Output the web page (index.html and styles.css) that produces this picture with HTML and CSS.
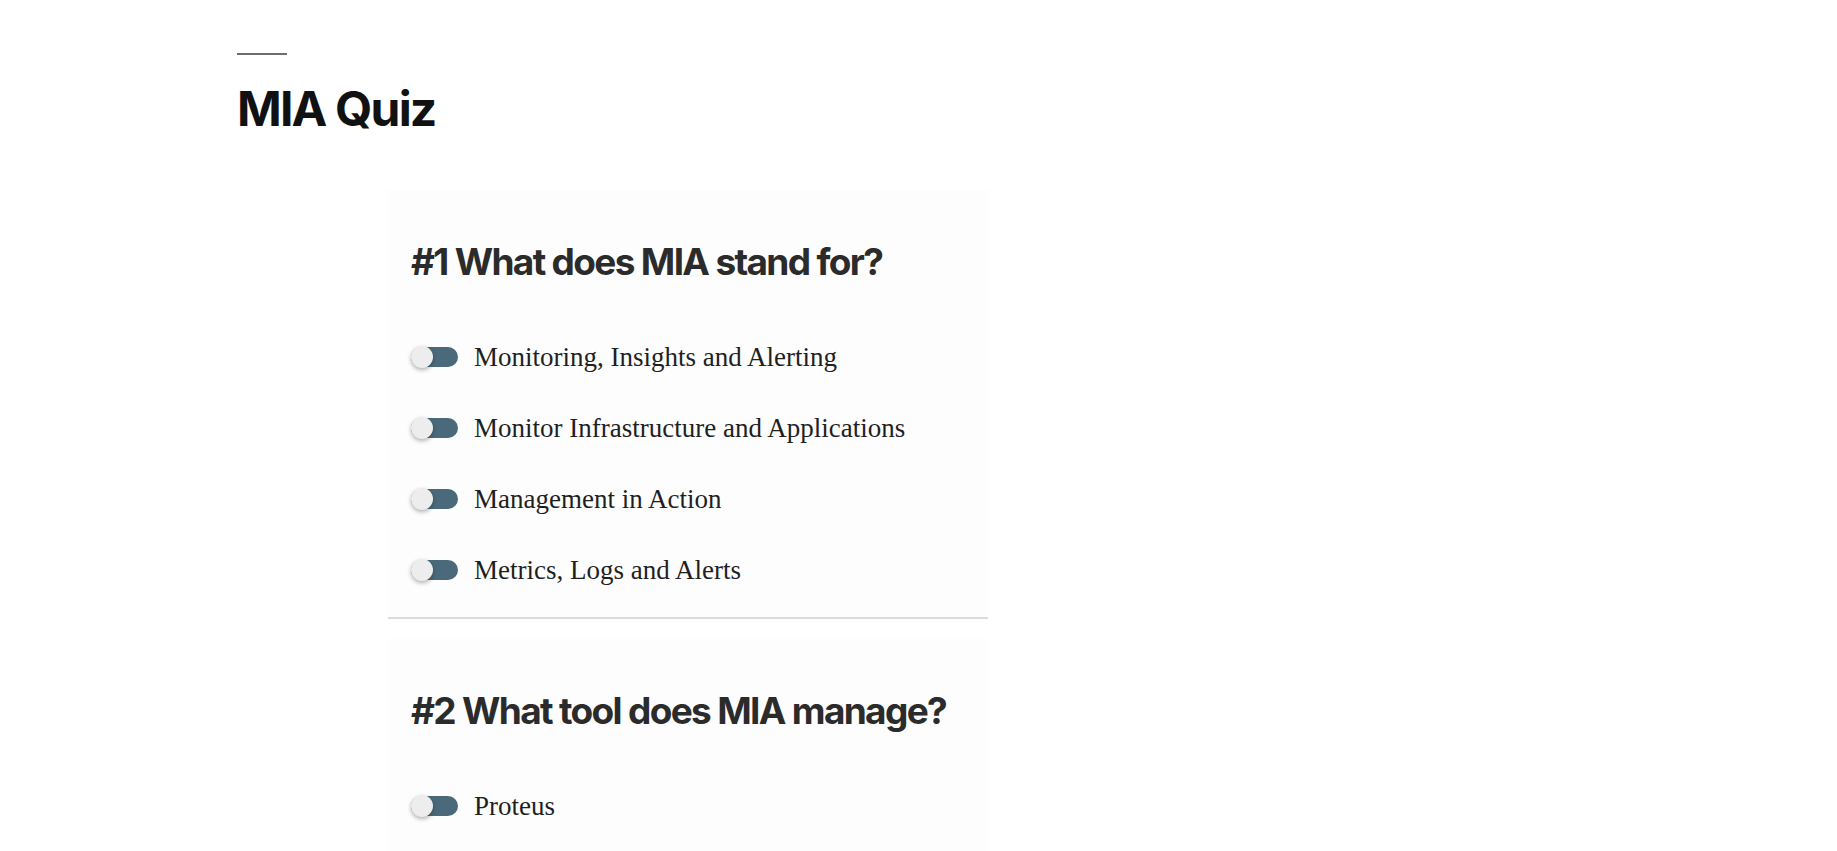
FILE: index.html
```html
<!DOCTYPE html>
<html lang="en">
<head>
    <meta charset="UTF-8">
    <meta name="viewport" content="width=device-width, initial-scale=1.0">
    <title>MIA Quiz</title>
    <link rel="stylesheet" href="styles.css">
</head>
<body>
    <main class="page">
        <header class="page-header">
            <hr class="title-rule">
            <h1>MIA Quiz</h1>
        </header>

        <section class="quiz">
            <div class="question">
                <h2>#1 What does MIA stand for?</h2>
                <ul class="answers">
                    <li><label class="answer"><span class="switch"></span><span>Monitoring, Insights and Alerting</span></label></li>
                    <li><label class="answer"><span class="switch"></span><span>Monitor Infrastructure and Applications</span></label></li>
                    <li><label class="answer"><span class="switch"></span><span>Management in Action</span></label></li>
                    <li><label class="answer"><span class="switch"></span><span>Metrics, Logs and Alerts</span></label></li>
                </ul>
            </div>

            <div class="question">
                <h2>#2 What tool does MIA manage?</h2>
                <ul class="answers">
                    <li><label class="answer"><span class="switch"></span><span>Proteus</span></label></li>
                </ul>
            </div>
        </section>
    </main>
</body>
</html>
```

FILE: styles.css
```css
:root {
    --heading-color: #111111;
    --question-color: #2b2b2b;
    --text-color: #1f1f1f;
    --card-background: #fdfdfd;
    --divider-color: #dcdcdc;
    --switch-track: #4a6a7c;
    --switch-knob: #ededed;
}

* {
    box-sizing: border-box;
    margin: 0;
    padding: 0;
}

body {
    background-color: #ffffff;
    color: var(--text-color);
    font-family: 'Liberation Serif', 'Times New Roman', serif;
}

.page {
    padding: 53px 0 0 237px;
}

.title-rule {
    width: 50px;
    border: none;
    border-top: 2px solid #6d6d6d;
}

.page-header h1 {
    margin-top: 28px;
    font-family: 'Inter', sans-serif;
    font-size: 48px;
    font-weight: 700;
    line-height: 1.1;
    letter-spacing: -0.038em;
    color: var(--heading-color);
}

.quiz {
    width: 600px;
    margin: 54px 0 0 151px;
}

.question {
    padding: 49px 23px 29px;
    background-color: var(--card-background);
    border-bottom: 2px solid var(--divider-color);
    margin-bottom: 20px;
}

.question h2 {
    font-family: 'Inter', sans-serif;
    font-size: 37px;
    font-weight: 700;
    line-height: 1.25;
    letter-spacing: -0.045em;
    color: var(--question-color);
}

.answers {
    list-style: none;
    margin-top: 54px;
    display: flex;
    flex-direction: column;
    gap: 35px;
}

.answer {
    display: flex;
    align-items: center;
    gap: 16px;
    font-size: 27px;
    line-height: 36px;
    cursor: pointer;
}

.switch {
    position: relative;
    flex: none;
    width: 47px;
    height: 20px;
    border-radius: 10px;
    background-color: var(--switch-track);
}

.switch::after {
    content: "";
    position: absolute;
    left: 0;
    top: -1px;
    width: 22px;
    height: 22px;
    border-radius: 50%;
    background-color: var(--switch-knob);
    box-shadow: 0 2px 4px rgba(0, 0, 0, 0.3);
}
```
